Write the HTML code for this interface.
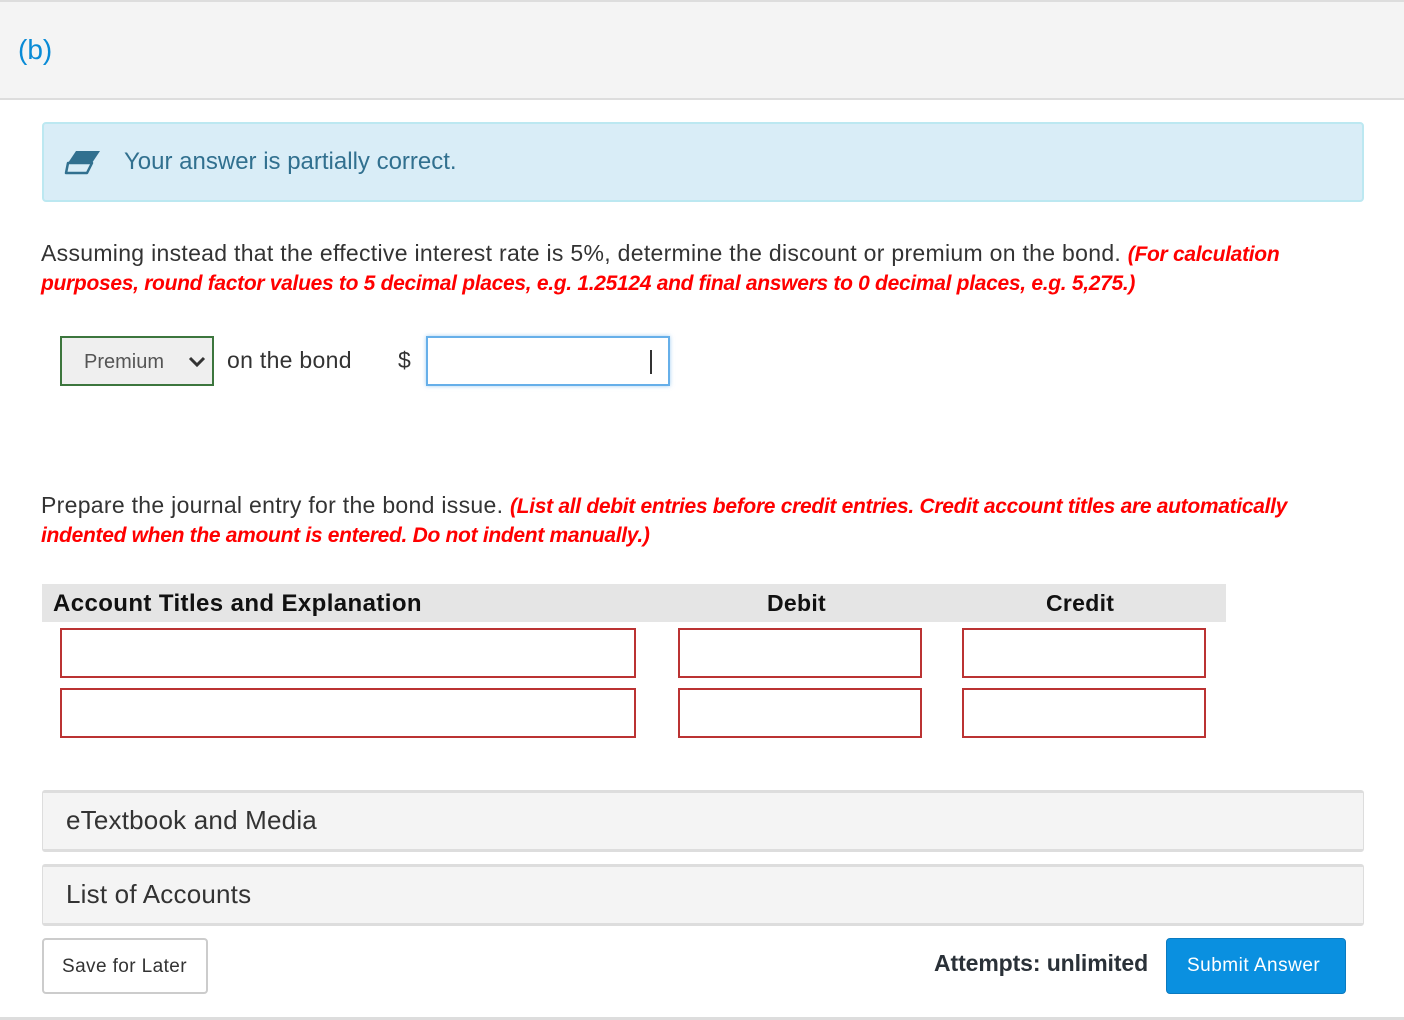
<!DOCTYPE html>
<html><head><meta charset="utf-8"><style>
*{box-sizing:border-box;margin:0;padding:0}
body{width:1404px;height:1020px;background:#fff;font-family:"Liberation Sans",sans-serif;color:#333;position:relative;overflow:hidden}
.a{position:absolute}
.txt{font-size:23px;letter-spacing:0.3px;white-space:nowrap}
.red{color:#f00;font-style:italic;font-weight:bold;font-size:21px;letter-spacing:-0.3px}
.in{position:absolute;border:2px solid #b33;height:50px;background:#fff}
.acc{position:absolute;left:42px;width:1322px;height:62px;background:#f4f4f4;border:1px solid #ddd;border-top:3px solid #ddd;border-bottom:3px solid #ddd;border-radius:3px;font-size:26px;padding:12px 0 0 23px;letter-spacing:0.2px;color:#333}
</style></head><body>
<div class="a" style="left:0;top:0;width:1404px;height:100px;background:#f4f4f4;border-top:2px solid #ddd;border-bottom:2px solid #ddd"></div>
<div class="a" style="left:18px;top:34px;font-size:28px;color:#0a8bd6">(b)</div>
<div class="a" style="left:42px;top:122px;width:1322px;height:80px;background:#d9edf7;border:2px solid #bce8f1;border-radius:4px"></div>
<svg class="a" style="left:64px;top:149px" width="38" height="26" viewBox="0 0 38 26"><path d="M12 2 H36 L28 14 H4 Z" fill="#31708f"/><path d="M4 14 H28 L23 24 H2 Z" fill="none" stroke="#31708f" stroke-width="2.5" stroke-linejoin="round"/></svg>
<div class="a txt" style="left:124px;top:148px;font-size:24px;letter-spacing:0;color:#31708f">Your answer is partially correct.</div>
<div class="a txt" style="left:41px;top:240px">Assuming instead that the effective interest rate is 5%, determine the discount or premium on the bond. <span class="red">(For calculation</span></div>
<div class="a txt red" style="left:41px;top:272px">purposes, round factor values to 5 decimal places, e.g. 1.25124 and final answers to 0 decimal places, e.g. 5,275.)</div>
<div class="a" style="left:60px;top:336px;width:154px;height:50px;border:2px solid #3c763d;background:#efefef;font-size:20px;color:#555;padding:13px 0 0 22px">Premium
<svg class="a" style="left:126px;top:17px" width="18" height="14" viewBox="0 0 18 14"><path d="M2 3 L9 10 L16 3" fill="none" stroke="#333" stroke-width="3"/></svg></div>
<div class="a txt" style="left:227px;top:347px;letter-spacing:0.3px">on the bond</div>
<div class="a txt" style="left:398px;top:347px">$</div>
<div class="a" style="left:426px;top:336px;width:244px;height:50px;border:2px solid #66afe9;box-shadow:0 0 4px rgba(102,175,233,.6)"><div class="a" style="left:222px;top:12px;width:2px;height:24px;background:#333"></div></div>
<div class="a txt" style="left:41px;top:492px">Prepare the journal entry for the bond issue. <span class="red">(List all debit entries before credit entries. Credit account titles are automatically</span></div>
<div class="a txt red" style="left:41px;top:524px">indented when the amount is entered. Do not indent manually.)</div>
<div class="a" style="left:42px;top:584px;width:1184px;height:38px;background:#e5e5e5"></div>
<div class="a txt" style="left:53px;top:590px;font-size:24px;letter-spacing:0.4px;font-weight:bold;color:#111">Account Titles and Explanation</div>
<div class="a txt" style="left:767px;top:590px;font-size:23px;font-weight:bold;color:#111">Debit</div>
<div class="a txt" style="left:1046px;top:590px;font-size:23px;font-weight:bold;color:#111">Credit</div>
<div class="in" style="left:60px;top:628px;width:576px"></div>
<div class="in" style="left:678px;top:628px;width:244px"></div>
<div class="in" style="left:962px;top:628px;width:244px"></div>
<div class="in" style="left:60px;top:688px;width:576px"></div>
<div class="in" style="left:678px;top:688px;width:244px"></div>
<div class="in" style="left:962px;top:688px;width:244px"></div>
<div class="acc" style="top:790px">eTextbook and Media</div>
<div class="acc" style="top:864px">List of Accounts</div>
<div class="a" style="left:42px;top:938px;width:166px;height:56px;border:2px solid #ccc;border-radius:4px;font-size:19px;padding:16px 0 0 18px;white-space:nowrap;letter-spacing:0.4px">Save for Later</div>
<div class="a txt" style="left:934px;top:950px;font-size:23px;font-weight:bold;color:#2a3138;letter-spacing:-0.1px">Attempts: unlimited</div>
<div class="a" style="left:1166px;top:938px;width:180px;height:56px;background:#0a90e0;border:1px solid #0a7ac0;border-radius:4px;color:#fff;font-size:19px;padding:16px 0 0 20px;white-space:nowrap;letter-spacing:0.5px">Submit Answer</div>
<div class="a" style="left:0;top:1017px;width:1404px;height:3px;background:#ddd"></div>
</body></html>
